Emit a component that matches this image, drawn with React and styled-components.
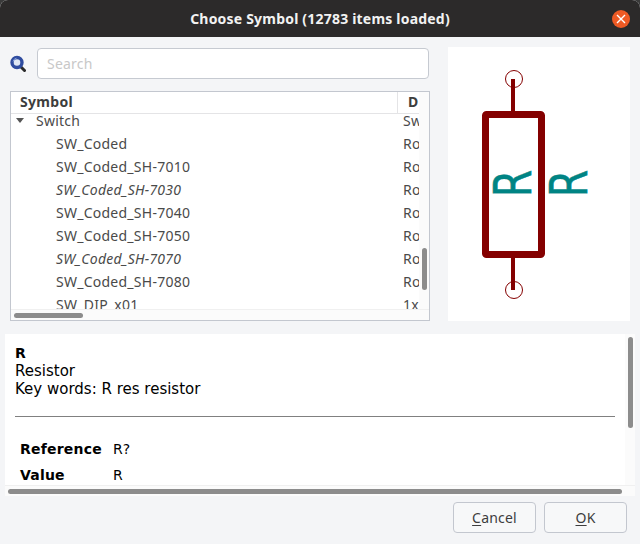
import React from 'react';
import styled, { createGlobalStyle } from 'styled-components';

const GlobalStyle = createGlobalStyle`
  html, body {
    margin: 0;
    padding: 0;
    background: #3a3a3a;
  }
`;

const Dialog = styled.div`
  width: 640px;
  height: 544px;
  display: flex;
  flex-direction: column;
  overflow: hidden;
  background: #f4f5f7;
  border-radius: 8px 8px 0 0;
  font-family: "Noto Sans", "Open Sans", sans-serif;
`;

const TitleBar = styled.div`
  position: relative;
  height: 37px;
  flex: none;
  display: flex;
  align-items: center;
  justify-content: center;
  background: #2c2a2a;
  color: #f2f2f2;
  font-size: 14px;
  font-weight: 700;
  letter-spacing: 0.2px;
`;

const CloseButton = styled.div`
  position: absolute;
  right: 10px;
  top: 10px;
  width: 18px;
  height: 18px;
  border-radius: 50%;
  background: #ee5a24;
  display: flex;
  align-items: center;
  justify-content: center;
`;

const TopArea = styled.div`
  height: 274px;
  flex: none;
  margin-top: 10px;
  padding: 0 10px;
  display: flex;
  gap: 18px;
`;

const LeftColumn = styled.div`
  width: 420px;
  display: flex;
  flex-direction: column;
  gap: 10px;
`;

const SearchRow = styled.div`
  display: flex;
  align-items: center;
  gap: 11px;
  height: 34px;
  box-sizing: border-box;
  padding: 1px 0 2px;
`;

const SearchInput = styled.div`
  flex: 1;
  height: 31px;
  margin-right: 1px;
  box-sizing: border-box;
  border: 1px solid #c6cad1;
  border-radius: 4px;
  background: #fff;
  padding: 0 0 1px 9px;
  display: flex;
  align-items: center;
  color: #c8c8c8;
  font-size: 14px;
  letter-spacing: 0.2px;
`;

const Tree = styled.div`
  position: relative;
  height: 230px;
  box-sizing: border-box;
  border: 1px solid #c3c7cf;
  background: #fff;
  overflow: hidden;
`;

const TreeHeader = styled.div`
  height: 22px;
  display: flex;
  border-bottom: 1px solid #e4e4e6;
  box-sizing: border-box;
  color: #3d3d3d;
  font-size: 14px;
  font-weight: 700;
  letter-spacing: 0.3px;
`;

const HeaderCell = styled.div`
  width: ${props => props.width}px;
  box-sizing: border-box;
  padding-left: ${props => props.pad}px;
  line-height: 20px;
  overflow: hidden;
  border-left: ${props => props.divided ? '1px solid #e4e4e6' : 'none'};
`;

const TreeBody = styled.div`
  height: 206px;
  overflow: hidden;
`;

const TreeRows = styled.div`
  margin-top: -5px;
`;

const Row = styled.div`
  height: 23px;
  display: flex;
  align-items: center;
  color: #4a4a4a;
  font-size: 14px;
  letter-spacing: 0.25px;
  white-space: nowrap;
`;

const NameCell = styled.div`
  width: 392px;
  flex: none;
  box-sizing: border-box;
  padding-left: ${props => props.depth * 20 + 25}px;
  font-style: ${props => props.italic ? 'italic' : 'normal'};
`;

const DescCell = styled.div`
  width: 16px;
  flex: none;
  overflow: hidden;
`;

const Expander = styled.span`
  position: absolute;
  left: 5px;
  top: 26px;
  width: 0;
  height: 0;
  border-left: 4.5px solid transparent;
  border-right: 4.5px solid transparent;
  border-top: 5px solid #555;
`;

const ColumnGutter = styled.div`
  position: absolute;
  right: 0;
  top: 0;
  bottom: 0;
  width: 10px;
  background: #fbfbfb;
`;

const FooterGutter = styled.div`
  position: absolute;
  left: 0;
  right: 0;
  bottom: 0;
  height: 10px;
  background: #fbfbfb;
  border-top: 1px solid #f0f0f0;
`;

const ScrollThumb = styled.div`
  position: absolute;
  background: #8c8c8c;
  border-radius: 3px;
  left: ${props => props.left}px;
  top: ${props => props.top}px;
  width: ${props => props.w}px;
  height: ${props => props.h}px;
`;

const Preview = styled.div`
  width: 182px;
  height: 274px;
  background: #fff;
`;

const InfoPanel = styled.div`
  position: relative;
  height: 162px;
  flex: none;
  margin: 13px 5px 0;
  box-sizing: border-box;
  background: #fff;
  padding: 10px 10px 0;
  overflow: hidden;
  color: #000;
  font-family: "DejaVu Sans", sans-serif;
  font-size: 15px;
  line-height: 18px;
`;

const InfoTitle = styled.div`
  font-weight: 700;
  font-size: 14px;
`;

const Rule = styled.div`
  height: 1px;
  background: #808080;
  margin: 18px 10px 0 0;
`;

const Props = styled.div`
  margin: 23px 0 0 5px;
  display: grid;
  grid-template-columns: 93px 1fr;
  row-gap: 8px;
  font-size: 14px;
`;

const PropName = styled.div`
  font-weight: 700;
  letter-spacing: 0.2px;
`;

const ButtonRow = styled.div`
  display: flex;
  justify-content: flex-end;
  gap: 8px;
  padding: 6px 13px 0 0;
`;

const Button = styled.div`
  width: 83px;
  height: 31px;
  box-sizing: border-box;
  border: 1px solid #c3c7cf;
  border-radius: 4px;
  background: #f7f8f9;
  display: flex;
  align-items: center;
  justify-content: center;
  color: #3d3d3d;
  font-size: 14px;
  letter-spacing: 0.2px;
  u {
    text-underline-offset: 2px;
  }
`;

const symbols = [
  { name: 'SW_Coded', desc: 'Ro' },
  { name: 'SW_Coded_SH-7010', desc: 'Ro' },
  { name: 'SW_Coded_SH-7030', desc: 'Ro', italic: true },
  { name: 'SW_Coded_SH-7040', desc: 'Ro' },
  { name: 'SW_Coded_SH-7050', desc: 'Ro' },
  { name: 'SW_Coded_SH-7070', desc: 'Ro', italic: true },
  { name: 'SW_Coded_SH-7080', desc: 'Ro' },
  { name: 'SW_DIP_x01', desc: '1x' },
];

const SearchIcon = () => (
  <svg width="16" height="18" viewBox="0 0 16 18" style={{ flex: 'none' }}>
    <line x1="11" y1="12" x2="14.5" y2="15.5" stroke="#2a2a2a" strokeWidth="3" strokeLinecap="round" />
    <circle cx="7" cy="7.5" r="5" fill="#dfe7f4" stroke="#2f4c9f" strokeWidth="3.4" />
    <path d="M3 6.5 A4.4 4.4 0 0 1 6.5 3.2" fill="none" stroke="#86a0dc" strokeWidth="1" />
  </svg>
);

const ResistorSymbol = () => (
  <svg width="182" height="274" viewBox="0 0 182 274">
    <g fill="none" stroke="#840000">
      <circle cx="66" cy="32" r="8.5" strokeWidth="1" />
      <circle cx="66" cy="243" r="8.5" strokeWidth="1" />
      <line x1="65" y1="32" x2="65" y2="64" strokeWidth="4" />
      <line x1="65" y1="211" x2="65" y2="243" strokeWidth="4" />
      <rect x="37.5" y="67.5" width="56" height="140" rx="1" strokeWidth="7" />
    </g>
    <g fill="#008484" stroke="#008484" strokeWidth="0.6" fontFamily="'DejaVu Sans', sans-serif" fontSize="52">
      <text transform="translate(82.5 146.5) rotate(-90) scale(0.76 1) translate(-5 0)">R</text>
      <text transform="translate(138.5 146.5) rotate(-90) scale(0.76 1) translate(-5 0)">R</text>
    </g>
  </svg>
);

const App = () => (
  <>
    <GlobalStyle />
    <Dialog>
      <TitleBar>
        Choose Symbol (12783 items loaded)
        <CloseButton>
          <svg width="10" height="10" viewBox="0 0 10 10">
            <path d="M1 1 L9 9 M9 1 L1 9" stroke="#fff" strokeWidth="1.4" />
          </svg>
        </CloseButton>
      </TitleBar>
      <TopArea>
        <LeftColumn>
          <SearchRow>
            <SearchIcon />
            <SearchInput>Search</SearchInput>
          </SearchRow>
          <Tree>
            <TreeHeader>
              <HeaderCell width={386} pad={9}>Symbol</HeaderCell>
              <HeaderCell width={24} pad={10} divided>D</HeaderCell>
            </TreeHeader>
            <TreeBody>
              <TreeRows>
                <Row>
                  <NameCell depth={0}>Switch</NameCell>
                  <DescCell>Sw</DescCell>
                </Row>
                {symbols.map(symbol => (
                  <Row key={symbol.name}>
                    <NameCell depth={1} italic={symbol.italic}>{symbol.name}</NameCell>
                    <DescCell>{symbol.desc}</DescCell>
                  </Row>
                ))}
              </TreeRows>
            </TreeBody>
            <Expander />
            <ColumnGutter />
            <FooterGutter />
            <ScrollThumb left={3} top={221} w={69} h={5} />
            <ScrollThumb left={411} top={156} w={5} h={42} />
          </Tree>
        </LeftColumn>
        <Preview>
          <ResistorSymbol />
        </Preview>
      </TopArea>
      <InfoPanel>
        <InfoTitle>R</InfoTitle>
        <div>Resistor</div>
        <div>Key words: R res resistor</div>
        <Rule />
        <Props>
          <PropName>Reference</PropName>
          <div>R?</div>
          <PropName>Value</PropName>
          <div>R</div>
        </Props>
        <ColumnGutter />
        <FooterGutter />
        <ScrollThumb left={623} top={3} w={5} h={91} />
        <ScrollThumb left={3} top={155} w={614} h={5} />
      </InfoPanel>
      <ButtonRow>
        <Button><span><u>C</u>ancel</span></Button>
        <Button><span><u>O</u>K</span></Button>
      </ButtonRow>
    </Dialog>
  </>
);

export default App;
